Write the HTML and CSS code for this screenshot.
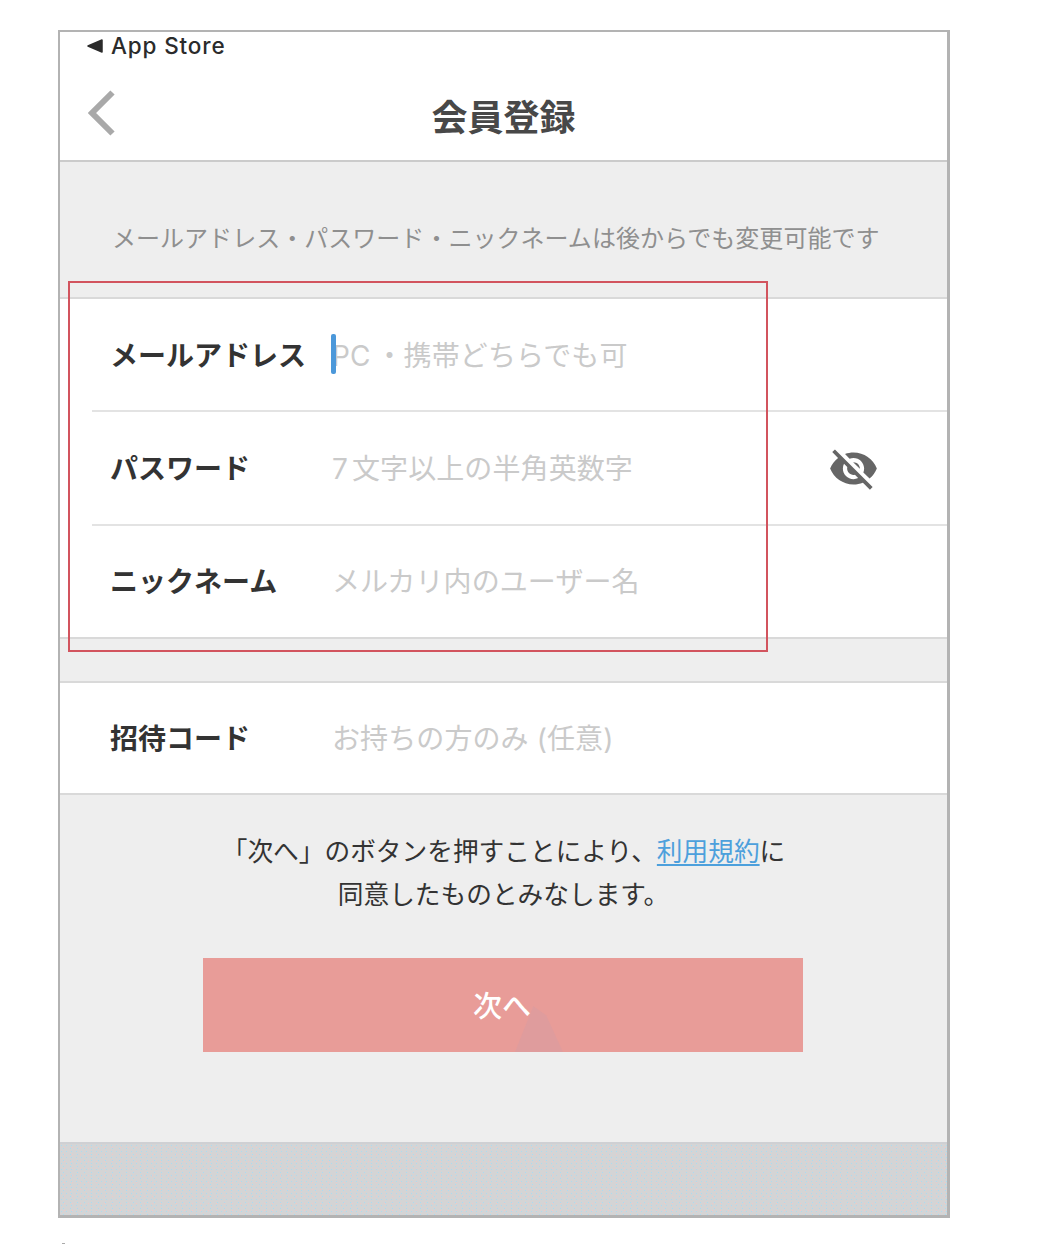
FILE: index.html
```html
<!DOCTYPE html>
<html lang="ja">
<head>
  <meta charset="UTF-8">
  <title>会員登録</title>
  <link rel="stylesheet" href="styles.css">
</head>
<body>
  <div class="phone">
    <div class="header">
      <div class="status">
        <svg class="status-arrow" width="16" height="14" viewBox="0 0 16 14"><path d="M1 7L15 1V13Z" fill="#2b2b2b" stroke="#2b2b2b" stroke-width="1.5" stroke-linejoin="round"/></svg>
        <span>App Store</span>
      </div>
      <div class="navbar">
        <svg class="back" width="28" height="46" viewBox="0 0 28 46"><path d="M24.5 2.5L4 23L24.5 43.5" fill="none" stroke="#a9a9a9" stroke-width="6"/></svg>
        <h1>会員登録</h1>
      </div>
    </div>

    <p class="notice">メールアドレス・パスワード・ニックネームは後からでも変更可能です</p>

    <div class="group">
      <div class="row">
        <span class="label">メールアドレス</span>
        <span class="field"><i class="caret"></i>PC ・携帯どちらでも可</span>
      </div>
      <div class="row">
        <span class="label">パスワード</span>
        <span class="field"><span class="digit">7</span>文字以上の半角英数字</span>
        <svg class="eye" width="51" height="51" viewBox="0 0 24 24" fill="#666"><path d="M12 7c2.76 0 5 2.24 5 5 0 .65-.13 1.26-.36 1.83l2.92 2.92c1.51-1.26 2.7-2.89 3.43-4.75-1.73-4.39-6-7.5-11-7.5-1.4 0-2.74.25-3.98.7l2.16 2.16C10.74 7.13 11.35 7 12 7zM2 4.27l2.28 2.28.46.46C3.08 8.3 1.78 10.02 1 12c1.73 4.39 6 7.5 11 7.5 1.55 0 3.03-.3 4.38-.84l.42.42L19.73 22 21 20.73 3.27 3 2 4.27zM7.53 9.8l1.55 1.55c-.05.21-.08.43-.08.65 0 1.66 1.34 3 3 3 .22 0 .44-.03.65-.08l1.55 1.55c-.67.33-1.41.53-2.2.53-2.76 0-5-2.24-5-5 0-.79.2-1.53.53-2.2zm4.31-.78l3.15 3.15.02-.16c0-1.66-1.34-3-3-3l-.17.01z"/></svg>
      </div>
      <div class="row">
        <span class="label">ニックネーム</span>
        <span class="field">メルカリ内のユーザー名</span>
      </div>
      <div class="highlight"></div>
    </div>

    <div class="group invite">
      <div class="row">
        <span class="label">招待コード</span>
        <span class="field optional">お持ちの方のみ (任意)</span>
      </div>
    </div>

    <p class="terms">「次へ」のボタンを押すことにより、<a href="#">利用規約</a>に<br>同意したものとみなします。</p>
    <button class="next"><span>次へ</span></button>

    <div class="keyboard"></div>
  </div>
  <div class="tick"></div>
</body>
</html>
```

FILE: styles.css
```css
* { box-sizing: border-box; }
body {
  margin: 0;
  height: 1244px;
  padding: 30px 0 0 58px;
  overflow: hidden;
  background: #fff;
  color: #333;
  font-family: Inter, "Noto Sans CJK JP", sans-serif;
}
.phone {
  display: flex;
  flex-direction: column;
  width: 892px;
  height: 1188px;
  border: 3px solid #b3b3b3;
  border-width: 2px 3px 3px 2px;
  background: #eee;
}
.header {
  height: 130px;
  background: #fff;
  border-bottom: 2px solid #cbcbcb;
}
.status {
  display: flex;
  align-items: center;
  gap: 8px;
  height: 27px;
  padding-left: 27px;
  font-size: 22.5px;
  font-weight: 500;
  letter-spacing: 0.85px;
  color: #2b2b2b;
}
.navbar {
  display: flex;
  align-items: center;
  height: 101px;
  padding: 17px 0 0 28px;
}
.back { margin-bottom: 11px; }
h1 {
  flex: 1;
  margin: 0 56px 0 0;
  text-align: center;
  font-size: 36px;
  line-height: 52px;
  font-weight: 700;
  color: #484848;
}
.notice {
  margin: 0;
  height: 135px;
  padding: 21px 0 0 52px;
  font-size: 24px;
  line-height: 112px;
  letter-spacing: 0.03px;
  color: #8f8f8f;
  white-space: nowrap;
}
.group {
  position: relative;
  border-top: 2px solid #d9d9d9;
  border-bottom: 2px solid #d9d9d9;
  background: #fff;
}
.invite { margin-top: 42px; }
.row {
  display: flex;
  align-items: center;
  height: 111px;
  margin-left: 32px;
  padding: 0 68px 2px 18px;
  font-size: 28px;
}
.row + .row {
  height: 113.5px;
  border-top: 2px solid #e3e3e3;
}
.invite .row {
  height: 110px;
  padding-bottom: 3px;
}
.label {
  width: 222px;
  font-weight: 700;
}
.field {
  position: relative;
  flex: 1;
  color: #cacaca;
  letter-spacing: 0.1px;
  word-spacing: -3px;
}
.optional { word-spacing: 0; }
.digit { margin-right: 4px; }
.eye { margin-top: 3px; }
.caret {
  position: absolute;
  left: -1px;
  top: 0;
  width: 5px;
  height: 40px;
  border-radius: 2px;
  background: #4b98da;
}
/* red frame around the three required fields */
.highlight {
  position: absolute;
  left: 8px;
  top: -18px;
  width: 700px;
  height: 371px;
  border: 2px solid #d2545e;
}
.terms {
  margin: 35px 0 0;
  text-align: center;
  font-size: 25.7px;
  line-height: 43px;
}
.terms a {
  color: #4da0dc;
  text-decoration: underline;
  text-underline-offset: 3px;
}
.next {
  position: relative;
  align-self: center;
  width: 600px;
  height: 94px;
  margin: 42px 1px 0 0;
  padding: 0 2px 3px 0;
  border: 0;
  background: #e89c98;
  color: #fff;
  font: 500 29px "Noto Sans CJK JP", sans-serif;
}
.next::before {
  content: "";
  position: absolute;
  left: 312px;
  bottom: 0;
  width: 48px;
  height: 46px;
  background: #df9c9d;
  clip-path: polygon(0 100%, 38% 0, 65% 20%, 100% 100%);
}
.next span { position: relative; }
.keyboard {
  height: 73px;
  margin-top: auto;
  border-top: 2px solid #cfd0d3;
  background-color: #d4d4d5;
  background-image:
    radial-gradient(circle at 1.5px 1.5px, #a9dcf2 0.7px, transparent 0.8px),
    radial-gradient(circle at 4.5px 3.5px, #efc8c8 0.7px, transparent 0.8px),
    radial-gradient(circle at 3.5px 4.5px, #a9dcf2 0.7px, transparent 0.8px);
  background-size: 5px 6px, 8px 7px, 7px 6px;
}
.tick {
  width: 3px;
  height: 1px;
  margin: 25px 0 0 4px;
  background: #aaa;
}
```
